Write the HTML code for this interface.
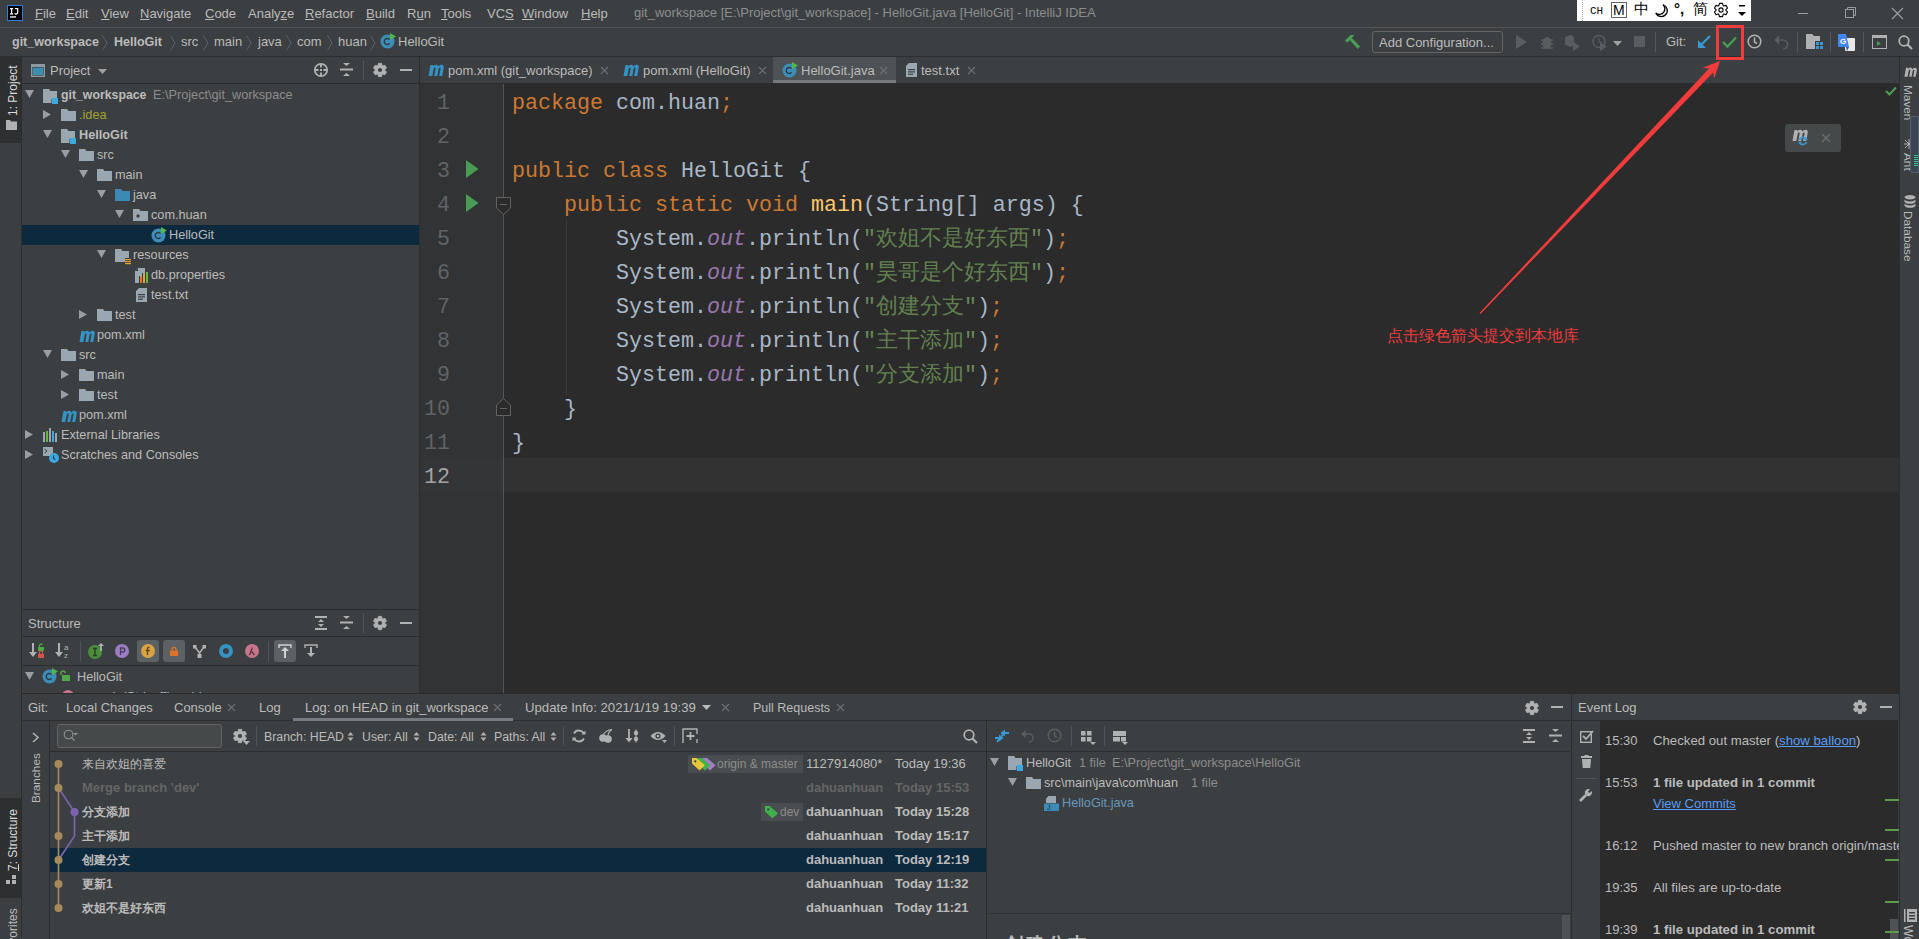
<!DOCTYPE html>
<html><head><meta charset="utf-8">
<style>
*{margin:0;padding:0;box-sizing:border-box}
html,body{width:1919px;height:939px;overflow:hidden;background:#3C3F41}
body{position:relative;font-family:"Liberation Sans",sans-serif;font-size:12.7px;color:#BBBBBB}
.a{position:absolute}
.t{position:absolute;white-space:pre;line-height:16px}
.b{font-weight:bold}
.u{text-decoration:underline}
.code{position:absolute;font-family:"Liberation Mono",monospace;font-size:21.67px;line-height:34px;white-space:pre;color:#A9B7C6}
.kw{color:#CC7832}
.str{color:#6A8759}
.st{color:#9876AA;font-style:italic}
.fn{color:#FFC66D}
.cj{font-size:22px;color:#62804F}
.c12{font-size:12px}
.ln{position:absolute;font-family:"Liberation Mono",monospace;font-size:21.67px;line-height:34px;text-align:right;width:40px}
svg{overflow:visible}
</style></head><body>
<div class="a" style="left:0px;top:0px;width:1919px;height:27px;background:#3C3F41;"></div>
<div class="a" style="left:0px;top:27px;width:1919px;height:1px;background:#505354;"></div>
<div class="a" style="left:0px;top:28px;width:1919px;height:28px;background:#3C3F41;"></div>
<div class="a" style="left:0px;top:56px;width:1919px;height:1px;background:#2B2D2E;"></div>
<svg class="a" style="left:7px;top:5px" width="16" height="16" viewBox="0 0 16 16"><rect x="0.5" y="0.5" width="15" height="15" fill="#000" stroke="#2F7BE0" stroke-width="1"/><path d="M3 3H6.2V4.2H5.2V8.2H6.2V9.5H3V8.2H4V4.2H3Z" fill="#fff"/><path d="M8 3H11.3V7.3A2.3 2.3 0 0 1 7.2 8.8L8.1 7.9A1.1 1.1 0 0 0 10.1 7.3V4.2H8Z" fill="#fff"/><rect x="3" y="11.3" width="6" height="1.3" fill="#fff"/></svg>
<div class="t " style="left:35px;top:6px;font-size:13px"><span class="u">F</span>ile</div>
<div class="t " style="left:66px;top:6px;font-size:13px"><span class="u">E</span>dit</div>
<div class="t " style="left:101px;top:6px;font-size:13px"><span class="u">V</span>iew</div>
<div class="t " style="left:140px;top:6px;font-size:13px"><span class="u">N</span>avigate</div>
<div class="t " style="left:205px;top:6px;font-size:13px"><span class="u">C</span>ode</div>
<div class="t " style="left:248px;top:6px;font-size:13px">Analy<span class="u">z</span>e</div>
<div class="t " style="left:305px;top:6px;font-size:13px"><span class="u">R</span>efactor</div>
<div class="t " style="left:366px;top:6px;font-size:13px"><span class="u">B</span>uild</div>
<div class="t " style="left:407px;top:6px;font-size:13px">R<span class="u">u</span>n</div>
<div class="t " style="left:441px;top:6px;font-size:13px"><span class="u">T</span>ools</div>
<div class="t " style="left:487px;top:6px;font-size:13px">VC<span class="u">S</span></div>
<div class="t " style="left:522px;top:6px;font-size:13px"><span class="u">W</span>indow</div>
<div class="t " style="left:581px;top:6px;font-size:13px"><span class="u">H</span>elp</div>
<div class="t " style="left:634px;top:5px;color:#8B8E90;font-size:13px">git_workspace [E:\Project\git_workspace] - HelloGit.java [HelloGit] - IntelliJ IDEA</div>
<div class="a" style="left:1577px;top:0px;width:174px;height:21px;background:#FFFFFF;"></div>
<div class="a" style="left:1582px;top:0;width:1px;height:21px;border-left:1px dotted #AAA"></div>
<div class="t " style="left:1590px;top:3px;color:#000;font-family:'Liberation Mono';font-size:11px">CH</div>
<div class="a" style="left:1611px;top:2px;width:16px;height:16px;background:transparent;border:1px solid #666"></div>
<div class="t " style="left:1613px;top:2px;color:#000;font-size:14px">M</div>
<div class="t " style="left:1634px;top:1px;color:#000;font-size:15px">中</div>
<svg class="a" style="left:1655px;top:4px" width="14" height="13" viewBox="0 0 14 13"><path d="M8 0.8A6 6 0 1 1 0.8 9A5.2 5.2 0 0 0 8 0.8Z" fill="none" stroke="#000" stroke-width="1.3"/></svg>
<div class="t " style="left:1674px;top:1px;color:#000;font-size:15px;font-weight:bold">°,</div>
<div class="t " style="left:1693px;top:1px;color:#000;font-size:15px">简</div>
<svg class="a" style="left:1714px;top:3px" width="15" height="15" viewBox="0 0 15 15"><path d="M4.85 2.60L5.47 0.37L8.53 0.37L9.15 2.60L9.74 2.94L11.97 2.36L13.50 5.01L11.89 6.66L11.89 7.34L13.50 8.99L11.97 11.64L9.74 11.06L9.15 11.40L8.53 13.63L5.47 13.63L4.85 11.40L4.26 11.06L2.03 11.64L0.50 8.99L2.11 7.34L2.11 6.66L0.50 5.01L2.03 2.36L4.26 2.94Z" fill="none" stroke="#000" stroke-width="1.1" stroke="#AFB1B3" stroke-width="0.8" stroke-linejoin="round"/><circle cx="7" cy="7" r="2.1" fill="none" stroke="#000" stroke-width="1.1"/></svg>
<svg class="a" style="left:1738px;top:5px" width="8" height="11" viewBox="0 0 8 11"><rect x="1" y="0" width="6" height="1.5" fill="#000"/><path d="M0 7H8L4 11Z" fill="#000"/></svg>
<div class="a" style="left:1798px;top:13px;width:10px;height:1px;background:#9A9DA0;"></div>
<svg class="a" style="left:1845px;top:7px" width="11" height="11" viewBox="0 0 11 11"><rect x="0.5" y="2.5" width="8" height="8" fill="none" stroke="#9A9DA0"/><path d="M2.5 2.5V0.5H10.5V8.5H8.5" fill="none" stroke="#9A9DA0"/></svg>
<svg class="a" style="left:1892px;top:8px" width="11" height="11" viewBox="0 0 11 11"><path d="M0 0L11 11M11 0L0 11" stroke="#9A9DA0" stroke-width="1.2"/></svg>
<div class="t b" style="left:12px;top:34px;font-size:12.5px">git_workspace</div>
<div class="t b" style="left:114px;top:34px;font-size:12.5px">HelloGit</div>
<div class="t " style="left:181px;top:34px;font-size:13px">src</div>
<div class="t " style="left:214px;top:34px;font-size:13px">main</div>
<div class="t " style="left:258px;top:34px;font-size:13px">java</div>
<div class="t " style="left:297px;top:34px;font-size:13px">com</div>
<div class="t " style="left:338px;top:34px;font-size:13px">huan</div>
<svg class="a" style="left:102px;top:35px" width="6" height="16" viewBox="0 0 6 16"><path d="M0.5 0.5L5 8L0.5 15.5" stroke="#5E6164" fill="none"/></svg>
<svg class="a" style="left:170px;top:35px" width="6" height="16" viewBox="0 0 6 16"><path d="M0.5 0.5L5 8L0.5 15.5" stroke="#5E6164" fill="none"/></svg>
<svg class="a" style="left:203px;top:35px" width="6" height="16" viewBox="0 0 6 16"><path d="M0.5 0.5L5 8L0.5 15.5" stroke="#5E6164" fill="none"/></svg>
<svg class="a" style="left:246px;top:35px" width="6" height="16" viewBox="0 0 6 16"><path d="M0.5 0.5L5 8L0.5 15.5" stroke="#5E6164" fill="none"/></svg>
<svg class="a" style="left:286px;top:35px" width="6" height="16" viewBox="0 0 6 16"><path d="M0.5 0.5L5 8L0.5 15.5" stroke="#5E6164" fill="none"/></svg>
<svg class="a" style="left:327px;top:35px" width="6" height="16" viewBox="0 0 6 16"><path d="M0.5 0.5L5 8L0.5 15.5" stroke="#5E6164" fill="none"/></svg>
<svg class="a" style="left:370px;top:35px" width="6" height="16" viewBox="0 0 6 16"><path d="M0.5 0.5L5 8L0.5 15.5" stroke="#5E6164" fill="none"/></svg>
<svg class="a" style="left:380px;top:33px" width="16" height="16" viewBox="0 0 16 16"><circle cx="7.5" cy="8.5" r="7" fill="#3E8DB8"/><path d="M9.6 6.6A3 3 0 1 0 9.6 10.4" stroke="#2B3A45" stroke-width="1.4" fill="none"/><path d="M10 0L16 3.5L10 7Z" fill="#4FB848"/></svg>
<div class="t " style="left:398px;top:34px;font-size:13px">HelloGit</div>
<svg class="a" style="left:1345px;top:34px" width="16" height="16" viewBox="0 0 16 16"><path d="M0 6.4L5.5 0.9H9.2L6.9 3.9L15.1 12.6L12.7 15L4.9 6.2L2 8.6Z" fill="#499C54"/></svg>
<div class="a" style="left:1372px;top:31px;width:131px;height:22px;background:transparent;border:1px solid #646464;border-radius:3px"></div>
<div class="t " style="left:1379px;top:35px;font-size:13px">Add Configuration...</div>
<svg class="a" style="left:1516px;top:35px" width="11" height="14" viewBox="0 0 11 14"><path d="M0 0V14L11 7Z" fill="#5A5D5F"/></svg>
<svg class="a" style="left:1540px;top:34px" width="14" height="16" viewBox="0 0 14 16"><ellipse cx="7" cy="9" rx="4.5" ry="6" fill="#5A5D5F"/><path d="M1 6H13M1 10H13M1 14H13" stroke="#5A5D5F" stroke-width="1.5"/></svg>
<svg class="a" style="left:1565px;top:35px" width="16" height="16" viewBox="0 0 16 16"><path d="M0 2L6 0L9 2V9L6 12L0 10Z" fill="#5A5D5F"/><path d="M8 7V16L15 11.5Z" fill="#5A5D5F"/></svg>
<svg class="a" style="left:1592px;top:34px" width="17" height="17" viewBox="0 0 17 17"><circle cx="7" cy="7.5" r="6" fill="none" stroke="#5A5D5F" stroke-width="1.5"/><path d="M7 4V8H10" stroke="#5A5D5F" fill="none"/><path d="M8 8V17L15 12.5Z" fill="#5A5D5F"/></svg>
<svg class="a" style="left:1613px;top:41px" width="9" height="5" viewBox="0 0 9 5"><path d="M0 0H9L4.5 5Z" fill="#A0A0A0"/></svg>
<div class="a" style="left:1634px;top:36px;width:11px;height:11px;background:#5A5D5F;"></div>
<div class="a" style="left:1655px;top:32px;width:1px;height:20px;background:#55585A;"></div>
<div class="t " style="left:1666px;top:34px;font-size:13px">Git:</div>
<svg class="a" style="left:1697px;top:35px" width="14" height="14" viewBox="0 0 14 14"><path d="M13 1L3 11" stroke="#3A97D4" stroke-width="2.2"/><path d="M1 5V13H9Z" fill="#3A97D4"/></svg>
<svg class="a" style="left:1722px;top:36px" width="15" height="12" viewBox="0 0 15 12"><path d="M1 6L5.5 10.5L14 1.5" stroke="#499C54" stroke-width="2.4" fill="none"/></svg>
<svg class="a" style="left:1747px;top:34px" width="15" height="15" viewBox="0 0 15 15"><circle cx="7.5" cy="7.5" r="6.3" fill="none" stroke="#AFB1B3" stroke-width="1.6"/><path d="M7.5 3.5V8L10 9.5" stroke="#AFB1B3" stroke-width="1.5" fill="none"/></svg>
<svg class="a" style="left:1774px;top:34px" width="15" height="14" viewBox="0 0 15 14"><path d="M2 6H9A4.5 4.5 0 0 1 9 15" stroke="#5A5D5F" stroke-width="1.6" fill="none"/><path d="M0 6L5 1.5V10.5Z" fill="#5A5D5F"/></svg>
<div class="a" style="left:1797px;top:32px;width:1px;height:20px;background:#55585A;"></div>
<svg class="a" style="left:1806px;top:34px" width="17" height="17" viewBox="0 0 17 17"><path d="M0 0H6L8 2H14V7H9V15H0Z" fill="#AFB1B3"/><rect x="10" y="8" width="3" height="3" fill="#3A97D4"/><rect x="14" y="8" width="3" height="3" fill="#3A97D4"/><rect x="10" y="12" width="3" height="3" fill="#3A97D4"/><rect x="14" y="12" width="3" height="3" fill="#3A97D4"/></svg>
<div class="a" style="left:1830px;top:32px;width:1px;height:20px;background:#55585A;"></div>
<svg class="a" style="left:1838px;top:34px" width="18" height="18" viewBox="0 0 18 18"><rect x="7" y="4" width="10" height="13" rx="1" fill="#E8E8E8"/><path d="M0 1Q0 0 1 0H8L11 13H1Q0 13 0 12Z" fill="#4285F4"/><text x="2" y="10" font-size="8" font-weight="bold" fill="#fff" font-family="Liberation Sans">G</text><path d="M8 13L9 17L11 13Z" fill="#3060C0"/></svg>
<div class="a" style="left:1863px;top:32px;width:1px;height:20px;background:#55585A;"></div>
<svg class="a" style="left:1872px;top:35px" width="15" height="14" viewBox="0 0 15 14"><rect x="0.5" y="0.5" width="14" height="13" fill="none" stroke="#AFB1B3"/><rect x="0.5" y="0.5" width="14" height="2.5" fill="#AFB1B3"/><path d="M5 6V11L9 8.5Z" fill="#499C54"/></svg>
<svg class="a" style="left:1898px;top:35px" width="15" height="15" viewBox="0 0 15 15"><circle cx="6" cy="6" r="4.8" fill="none" stroke="#AFB1B3" stroke-width="1.8"/><path d="M9.5 9.5L14 14" stroke="#AFB1B3" stroke-width="2.2"/></svg>
<div class="a" style="left:0px;top:57px;width:21px;height:882px;background:#3C3F41;"></div>
<div class="a" style="left:21px;top:57px;width:1px;height:882px;background:#2B2D2E;"></div>
<div class="a" style="left:0px;top:57px;width:21px;height:86px;background:#2D2F30;"></div>
<div class="a" style="left:6px;top:116px;width:60px;height:14px;transform-origin:0 0;transform:rotate(-90deg);font-size:12px;line-height:14px;color:#DADADA;white-space:pre">1: Project</div>
<svg class="a" style="left:6px;top:120px" width="11" height="10" viewBox="0 0 11 10"><path d="M0 0H4L5 1.5H11V10H0Z" fill="#AFB1B3"/></svg>
<div class="a" style="left:0px;top:798px;width:21px;height:100px;background:#2D2F30;"></div>
<div class="a" style="left:6px;top:871px;width:70px;height:14px;transform-origin:0 0;transform:rotate(-90deg);font-size:12px;line-height:14px;color:#DADADA;white-space:pre"><span class="u">7</span>: Structure</div>
<svg class="a" style="left:6px;top:875px" width="11" height="10" viewBox="0 0 11 10"><rect x="0" y="5" width="4" height="4" fill="#AFB1B3"/><rect x="6" y="5" width="4" height="4" fill="#AFB1B3"/><rect x="6" y="0" width="4" height="4" fill="#AFB1B3"/></svg>
<div class="a" style="left:6px;top:971px;width:70px;height:14px;transform-origin:0 0;transform:rotate(-90deg);font-size:12px;line-height:14px;color:#BBBBBB;white-space:pre">2: Favorites</div>
<div class="a" style="left:22px;top:57px;width:397px;height:636px;background:#3C3F41;"></div>
<div class="a" style="left:419px;top:57px;width:1px;height:636px;background:#2B2D2E;"></div>
<div class="a" style="left:22px;top:83px;width:397px;height:1px;background:#2B2D2E;"></div>
<svg class="a" style="left:31px;top:64px" width="14" height="13" viewBox="0 0 14 13"><rect x="0" y="0" width="14" height="13" fill="#8E989F"/><rect x="1.5" y="3" width="11" height="8.5" fill="#2B2D2E"/><rect x="2" y="3.5" width="10" height="7.5" fill="#3D8FB0"/></svg>
<div class="t " style="left:50px;top:63px;font-size:13px">Project</div>
<svg class="a" style="left:98px;top:69px" width="9" height="5" viewBox="0 0 9 5"><path d="M0 0H9L4.5 5Z" fill="#A0A0A0"/></svg>
<svg class="a" style="left:314px;top:63px" width="14" height="14" viewBox="0 0 14 14"><circle cx="7" cy="7" r="6.2" fill="none" stroke="#AFB1B3" stroke-width="1.7"/><path d="M7 1V4.6M7 9.4V13M1 7H4.6M9.4 7H13" stroke="#AFB1B3" stroke-width="1.9"/><rect x="6" y="6" width="2" height="2" fill="#AFB1B3"/></svg>
<svg class="a" style="left:340px;top:63px" width="13" height="13" viewBox="0 0 13 13"><path d="M3 0H10L6.5 3Z" fill="#AFB1B3"/><rect x="0" y="5.5" width="13" height="2" fill="#AFB1B3"/><path d="M3 13H10L6.5 10Z" fill="#AFB1B3"/></svg>
<div class="a" style="left:363px;top:60px;width:1px;height:20px;background:#515456;"></div>
<svg class="a" style="left:373px;top:63px" width="14" height="14" viewBox="0 0 14 14"><path d="M4.85 2.60L5.47 0.37L8.53 0.37L9.15 2.60L9.74 2.94L11.97 2.36L13.50 5.01L11.89 6.66L11.89 7.34L13.50 8.99L11.97 11.64L9.74 11.06L9.15 11.40L8.53 13.63L5.47 13.63L4.85 11.40L4.26 11.06L2.03 11.64L0.50 8.99L2.11 7.34L2.11 6.66L0.50 5.01L2.03 2.36L4.26 2.94Z" fill="#AFB1B3" stroke="#AFB1B3" stroke-width="0.8" stroke-linejoin="round"/><circle cx="7" cy="7" r="2.1" fill="#3C3F41"/></svg>
<div class="a" style="left:400px;top:69px;width:12px;height:2px;background:#AFB1B3;"></div>
<div class="a" style="left:22px;top:225px;width:397px;height:20px;background:#0D293E;"></div>
<svg class="a" style="left:25px;top:90px" width="9" height="8" viewBox="0 0 9 8"><path d="M0 0H9L4.5 8Z" fill="#9A9DA1"/></svg>
<svg class="a" style="left:43px;top:89px" width="16" height="15" viewBox="0 0 16 15"><path d="M0 0H6L7.5 2H14V10H8.5V14H0Z" fill="#9AA7B0"/><rect x="9" y="9" width="6" height="6" fill="#3BA8E0"/></svg>
<div class="t " style="left:61px;top:87px;"><b style="font-size:12.3px">git_workspace</b></div>
<svg class="a" style="left:43px;top:110px" width="8" height="9" viewBox="0 0 8 9"><path d="M0 0V9L8 4.5Z" fill="#9A9DA1"/></svg>
<svg class="a" style="left:61px;top:109px" width="15" height="12" viewBox="0 0 15 12"><path d="M0 0H6L7.5 2H15V12H0Z" fill="#9AA7B0"/></svg>
<div class="t " style="left:79px;top:107px;"><span style="color:#A2A232">.idea</span></div>
<svg class="a" style="left:43px;top:130px" width="9" height="8" viewBox="0 0 9 8"><path d="M0 0H9L4.5 8Z" fill="#9A9DA1"/></svg>
<svg class="a" style="left:61px;top:129px" width="16" height="15" viewBox="0 0 16 15"><path d="M0 0H6L7.5 2H14V10H8.5V14H0Z" fill="#9AA7B0"/><rect x="9" y="9" width="6" height="6" fill="#3BA8E0"/></svg>
<div class="t " style="left:79px;top:127px;"><b>HelloGit</b></div>
<svg class="a" style="left:61px;top:150px" width="9" height="8" viewBox="0 0 9 8"><path d="M0 0H9L4.5 8Z" fill="#9A9DA1"/></svg>
<svg class="a" style="left:79px;top:149px" width="15" height="12" viewBox="0 0 15 12"><path d="M0 0H6L7.5 2H15V12H0Z" fill="#9AA7B0"/></svg>
<div class="t " style="left:97px;top:147px;">src</div>
<svg class="a" style="left:79px;top:170px" width="9" height="8" viewBox="0 0 9 8"><path d="M0 0H9L4.5 8Z" fill="#9A9DA1"/></svg>
<svg class="a" style="left:97px;top:169px" width="15" height="12" viewBox="0 0 15 12"><path d="M0 0H6L7.5 2H15V12H0Z" fill="#9AA7B0"/></svg>
<div class="t " style="left:115px;top:167px;">main</div>
<svg class="a" style="left:97px;top:190px" width="9" height="8" viewBox="0 0 9 8"><path d="M0 0H9L4.5 8Z" fill="#9A9DA1"/></svg>
<svg class="a" style="left:115px;top:189px" width="15" height="12" viewBox="0 0 15 12"><path d="M0 0H6L7.5 2H15V12H0Z" fill="#3D89B5"/></svg>
<div class="t " style="left:133px;top:187px;">java</div>
<svg class="a" style="left:115px;top:210px" width="9" height="8" viewBox="0 0 9 8"><path d="M0 0H9L4.5 8Z" fill="#9A9DA1"/></svg>
<svg class="a" style="left:133px;top:209px" width="15" height="12" viewBox="0 0 15 12"><path d="M0 0H6L7.5 2H15V12H0Z" fill="#9AA7B0"/><circle cx="5" cy="7" r="1.7" fill="#3C3F41"/></svg>
<div class="t " style="left:151px;top:207px;">com.huan</div>
<svg class="a" style="left:151px;top:227px" width="16" height="16" viewBox="0 0 16 16"><circle cx="7.5" cy="8.5" r="7" fill="#3E8DB8"/><path d="M9.6 6.6A3 3 0 1 0 9.6 10.4" stroke="#2B3A45" stroke-width="1.4" fill="none"/><path d="M10 0L16 3.5L10 7Z" fill="#4FB848"/></svg>
<div class="t " style="left:169px;top:227px;">HelloGit</div>
<svg class="a" style="left:97px;top:250px" width="9" height="8" viewBox="0 0 9 8"><path d="M0 0H9L4.5 8Z" fill="#9A9DA1"/></svg>
<svg class="a" style="left:115px;top:249px" width="16" height="15" viewBox="0 0 16 15"><path d="M0 0H6L7.5 2H14V9H10V13H0Z" fill="#9AA7B0"/><rect x="10" y="10" width="6" height="1.2" fill="#E0A431"/><rect x="10" y="12" width="6" height="1.2" fill="#E0A431"/><rect x="10" y="14" width="6" height="1.2" fill="#E0A431"/></svg>
<div class="t " style="left:133px;top:247px;">resources</div>
<svg class="a" style="left:135px;top:268px" width="14" height="15" viewBox="0 0 14 15"><path d="M3 0H10V15H0V3Z" fill="#9AA7B0"/><path d="M0 3H3V0Z" fill="#3C3F41"/><rect x="5" y="9" width="2" height="6" fill="#E8742A"/><rect x="8" y="6" width="2" height="9" fill="#E0A431"/><rect x="11" y="4" width="2" height="11" fill="#5FB83A"/><rect x="4" y="8" width="1" height="7" fill="#3C3F41"/><rect x="7" y="5" width="1" height="10" fill="#3C3F41"/><rect x="10" y="3" width="1" height="12" fill="#3C3F41"/></svg>
<div class="t " style="left:151px;top:267px;">db.properties</div>
<svg class="a" style="left:136px;top:288px" width="11" height="14" viewBox="0 0 11 14"><path d="M3 0H11V14H0V3Z" fill="#9AA7B0"/><rect x="2" y="6" width="7" height="1.2" fill="#3C3F41"/><rect x="2" y="8.3" width="7" height="1.2" fill="#3C3F41"/><rect x="2" y="10.6" width="5" height="1.2" fill="#3C3F41"/></svg>
<div class="t " style="left:151px;top:287px;">test.txt</div>
<svg class="a" style="left:79px;top:310px" width="8" height="9" viewBox="0 0 8 9"><path d="M0 0V9L8 4.5Z" fill="#9A9DA1"/></svg>
<svg class="a" style="left:97px;top:309px" width="15" height="12" viewBox="0 0 15 12"><path d="M0 0H6L7.5 2H15V12H0Z" fill="#9AA7B0"/></svg>
<div class="t " style="left:115px;top:307px;">test</div>
<svg class="a" style="left:79px;top:330px" width="16" height="12" viewBox="0 0 16 12"><path d="M0.5 12L2.5 1H5.2L5 2.4Q6.5 0.5 8.5 0.8Q10 1 10.3 2.6Q11.8 0.6 13.8 0.8Q16.2 1.2 15.7 4L14.2 12H11.2L12.6 4.6Q12.8 3.5 11.9 3.5Q10.9 3.5 10.6 4.8L9.2 12H6.3L7.7 4.6Q7.9 3.5 7 3.5Q6 3.5 5.7 4.8L4.3 12Z" fill="#3592C4"/></svg>
<div class="t " style="left:97px;top:327px;">pom.xml</div>
<svg class="a" style="left:43px;top:350px" width="9" height="8" viewBox="0 0 9 8"><path d="M0 0H9L4.5 8Z" fill="#9A9DA1"/></svg>
<svg class="a" style="left:61px;top:349px" width="15" height="12" viewBox="0 0 15 12"><path d="M0 0H6L7.5 2H15V12H0Z" fill="#9AA7B0"/></svg>
<div class="t " style="left:79px;top:347px;">src</div>
<svg class="a" style="left:61px;top:370px" width="8" height="9" viewBox="0 0 8 9"><path d="M0 0V9L8 4.5Z" fill="#9A9DA1"/></svg>
<svg class="a" style="left:79px;top:369px" width="15" height="12" viewBox="0 0 15 12"><path d="M0 0H6L7.5 2H15V12H0Z" fill="#9AA7B0"/></svg>
<div class="t " style="left:97px;top:367px;">main</div>
<svg class="a" style="left:61px;top:390px" width="8" height="9" viewBox="0 0 8 9"><path d="M0 0V9L8 4.5Z" fill="#9A9DA1"/></svg>
<svg class="a" style="left:79px;top:389px" width="15" height="12" viewBox="0 0 15 12"><path d="M0 0H6L7.5 2H15V12H0Z" fill="#9AA7B0"/></svg>
<div class="t " style="left:97px;top:387px;">test</div>
<svg class="a" style="left:61px;top:410px" width="16" height="12" viewBox="0 0 16 12"><path d="M0.5 12L2.5 1H5.2L5 2.4Q6.5 0.5 8.5 0.8Q10 1 10.3 2.6Q11.8 0.6 13.8 0.8Q16.2 1.2 15.7 4L14.2 12H11.2L12.6 4.6Q12.8 3.5 11.9 3.5Q10.9 3.5 10.6 4.8L9.2 12H6.3L7.7 4.6Q7.9 3.5 7 3.5Q6 3.5 5.7 4.8L4.3 12Z" fill="#3592C4"/></svg>
<div class="t " style="left:79px;top:407px;">pom.xml</div>
<svg class="a" style="left:25px;top:430px" width="8" height="9" viewBox="0 0 8 9"><path d="M0 0V9L8 4.5Z" fill="#9A9DA1"/></svg>
<svg class="a" style="left:43px;top:428px" width="14" height="14" viewBox="0 0 14 14"><rect x="0" y="4" width="2" height="10" fill="#9AA7B0"/><rect x="3" y="3" width="2" height="11" fill="#5FB83A"/><rect x="6" y="0" width="2" height="14" fill="#9AA7B0"/><rect x="9" y="3" width="2" height="11" fill="#3BA8E0"/><rect x="12" y="5" width="2" height="9" fill="#9AA7B0"/></svg>
<div class="t " style="left:61px;top:427px;">External Libraries</div>
<svg class="a" style="left:25px;top:450px" width="8" height="9" viewBox="0 0 8 9"><path d="M0 0V9L8 4.5Z" fill="#9A9DA1"/></svg>
<svg class="a" style="left:43px;top:447px" width="16" height="16" viewBox="0 0 16 16"><rect x="0" y="0" width="10" height="9" fill="#9AA7B0"/><path d="M1.5 2L4 4L1.5 6" stroke="#3C3F41" fill="none" stroke-width="1"/><circle cx="11" cy="11" r="5" fill="#3BA8E0"/><path d="M10.5 8.5V11.5L12.5 12.5" stroke="#2B3A45" stroke-width="1.1" fill="none"/></svg>
<div class="t " style="left:61px;top:447px;">Scratches and Consoles</div>
<div class="t " style="left:153px;top:87px;color:#8C8C8C">E:\Project\git_workspace</div>
<div class="a" style="left:22px;top:609px;width:397px;height:1px;background:#2B2D2E;"></div>
<div class="t " style="left:28px;top:616px;font-size:13px">Structure</div>
<svg class="a" style="left:315px;top:616px" width="13" height="14" viewBox="0 0 13 14"><rect x="0" y="0" width="12" height="2" fill="#AFB1B3"/><path d="M3 6H9L6 3Z" fill="#AFB1B3"/><path d="M3 8H9L6 11Z" fill="#AFB1B3"/><rect x="0" y="12" width="12" height="2" fill="#AFB1B3"/></svg>
<svg class="a" style="left:340px;top:616px" width="13" height="13" viewBox="0 0 13 13"><path d="M3 0H10L6.5 3Z" fill="#AFB1B3"/><rect x="0" y="5.5" width="13" height="2" fill="#AFB1B3"/><path d="M3 13H10L6.5 10Z" fill="#AFB1B3"/></svg>
<div class="a" style="left:363px;top:613px;width:1px;height:20px;background:#515456;"></div>
<svg class="a" style="left:373px;top:616px" width="14" height="14" viewBox="0 0 14 14"><path d="M4.85 2.60L5.47 0.37L8.53 0.37L9.15 2.60L9.74 2.94L11.97 2.36L13.50 5.01L11.89 6.66L11.89 7.34L13.50 8.99L11.97 11.64L9.74 11.06L9.15 11.40L8.53 13.63L5.47 13.63L4.85 11.40L4.26 11.06L2.03 11.64L0.50 8.99L2.11 7.34L2.11 6.66L0.50 5.01L2.03 2.36L4.26 2.94Z" fill="#AFB1B3" stroke="#AFB1B3" stroke-width="0.8" stroke-linejoin="round"/><circle cx="7" cy="7" r="2.1" fill="#3C3F41"/></svg>
<div class="a" style="left:400px;top:622px;width:12px;height:2px;background:#AFB1B3;"></div>
<div class="a" style="left:22px;top:636px;width:397px;height:1px;background:#2B2D2E;"></div>
<div class="a" style="left:22px;top:665px;width:397px;height:1px;background:#2B2D2E;"></div>
<svg class="a" style="left:29px;top:643px" width="16" height="15" viewBox="0 0 16 15"><path d="M4 0V10" stroke="#AFB1B3" stroke-width="2"/><path d="M0 9H8L4 14Z" fill="#AFB1B3"/><rect x="9" y="4" width="6" height="4" fill="#4FA84A"/><path d="M10.5 4V2A1.7 1.7 0 0 1 13.5 2" stroke="#4FA84A" fill="none" stroke-width="1.2"/><rect x="9" y="11" width="6" height="4" fill="#D9534F"/><path d="M10.5 11V9.5A1.5 1.5 0 0 1 13.5 9.5V11" stroke="#D9534F" fill="none" stroke-width="1.2"/></svg>
<svg class="a" style="left:55px;top:643px" width="15" height="15" viewBox="0 0 15 15"><path d="M4 0V10" stroke="#AFB1B3" stroke-width="2"/><path d="M0 9H8L4 14Z" fill="#AFB1B3"/><text x="9" y="6.5" font-size="8" fill="#AFB1B3" font-family="Liberation Sans">a</text><text x="9" y="14.5" font-size="8" fill="#AFB1B3" font-family="Liberation Sans">z</text></svg>
<div class="a" style="left:80px;top:641px;width:1px;height:20px;background:#515456;"></div>
<svg class="a" style="left:88px;top:643px" width="17" height="16" viewBox="0 0 17 16"><circle cx="7" cy="9" r="7" fill="#4A8E3B"/><path d="M5 5.5H9M7 5.5V12.5M5 12.5H9" stroke="#2F3A2C" stroke-width="1.4"/><path d="M13 8V2" stroke="#AFB1B3" stroke-width="1.8"/><path d="M10 3L13 0L16 3Z" fill="#AFB1B3"/></svg>
<svg class="a" style="left:115px;top:644px" width="14" height="14" viewBox="0 0 14 14"><circle cx="7" cy="7" r="7" fill="#9B7CC5"/><path d="M5.5 11V4H7.8A2 2 0 0 1 7.8 8H5.5" stroke="#4A3F5C" stroke-width="1.3" fill="none"/></svg>
<div class="a" style="left:137px;top:640px;width:22px;height:22px;background:#5C6164;border-radius:3px"></div>
<svg class="a" style="left:141px;top:644px" width="14" height="14" viewBox="0 0 14 14"><circle cx="7" cy="7" r="7" fill="#D9A343"/><path d="M8.5 3.5Q6.5 3 6.5 5V11M4.8 6.5H8.7" stroke="#5A4420" stroke-width="1.3" fill="none"/></svg>
<div class="a" style="left:163px;top:640px;width:22px;height:22px;background:#5C6164;border-radius:3px"></div>
<svg class="a" style="left:170px;top:647px" width="8" height="9" viewBox="0 0 8 9"><rect x="0" y="3.5" width="8" height="5.5" fill="#E0702A"/><path d="M2 3.8V2.5A2 2 0 0 1 6 2.5V3.8" stroke="#E0702A" stroke-width="1.3" fill="none"/></svg>
<svg class="a" style="left:193px;top:645px" width="13" height="13" viewBox="0 0 13 13"><rect x="0" y="0" width="3.5" height="3.5" fill="#AFB1B3"/><rect x="9.5" y="0" width="3.5" height="3.5" fill="#AFB1B3"/><rect x="4.5" y="9" width="4" height="4" fill="#AFB1B3"/><path d="M2 2L6.5 8L11 2M6.5 8V10" stroke="#AFB1B3" stroke-width="1.5" fill="none"/></svg>
<svg class="a" style="left:219px;top:644px" width="14" height="14" viewBox="0 0 14 14"><circle cx="7" cy="7" r="5" fill="none" stroke="#3592C4" stroke-width="4"/></svg>
<svg class="a" style="left:245px;top:644px" width="14" height="14" viewBox="0 0 14 14"><circle cx="7" cy="7" r="7" fill="#C6758A"/><path d="M4.5 11L7.5 3.5M6.2 7L9.5 11" stroke="#5C3540" stroke-width="1.3" fill="none"/></svg>
<div class="a" style="left:268px;top:641px;width:1px;height:20px;background:#515456;"></div>
<div class="a" style="left:274px;top:640px;width:22px;height:22px;background:#5C6164;border-radius:3px"></div>
<svg class="a" style="left:278px;top:644px" width="14" height="14" viewBox="0 0 14 14"><path d="M1 4V1H13V4" stroke="#CFD1D3" stroke-width="1.4" fill="none"/><path d="M7 14V6" stroke="#CFD1D3" stroke-width="2"/><path d="M3 7L7 3L11 7Z" fill="#CFD1D3"/></svg>
<svg class="a" style="left:304px;top:644px" width="14" height="14" viewBox="0 0 14 14"><path d="M1 4V1H13V4" stroke="#AFB1B3" stroke-width="1.4" fill="none"/><path d="M7 3V10" stroke="#AFB1B3" stroke-width="2"/><path d="M3 9L7 13L11 9Z" fill="#AFB1B3"/></svg>
<svg class="a" style="left:25px;top:672px" width="9" height="8" viewBox="0 0 9 8"><path d="M0 0H9L4.5 8Z" fill="#9A9DA1"/></svg>
<svg class="a" style="left:42px;top:668px" width="16" height="16" viewBox="0 0 16 16"><circle cx="7.5" cy="8.5" r="7" fill="#3E8DB8"/><path d="M9.6 6.6A3 3 0 1 0 9.6 10.4" stroke="#2B3A45" stroke-width="1.4" fill="none"/><path d="M10 0L16 3.5L10 7Z" fill="#4FB848"/></svg>
<svg class="a" style="left:60px;top:670px" width="10" height="11" viewBox="0 0 10 11"><rect x="2" y="5" width="8" height="6" fill="#4FA84A"/><path d="M1 5V3A2 2 0 0 1 5 3" stroke="#4FA84A" stroke-width="1.4" fill="none"/></svg>
<div class="t " style="left:77px;top:669px;">HelloGit</div>
<div class="a" style="left:22px;top:686px;width:397px;height:7px;overflow:hidden"><div class="a" style="left:40px;top:4px;width:12px;height:12px;border-radius:6px;background:#C6758A"></div><div class="t" style="left:73px;top:3px">main(String[]): void</div></div>
<div class="a" style="left:420px;top:57px;width:1479px;height:26px;background:#3C3F41;"></div>
<div class="a" style="left:420px;top:83px;width:1479px;height:1px;background:#2B2D2E;"></div>
<div class="a" style="left:773px;top:57px;width:123px;height:26px;background:#4E5254;"></div>
<div class="a" style="left:773px;top:80px;width:123px;height:3px;background:#747A80;"></div>
<svg class="a" style="left:428px;top:64px" width="16" height="12" viewBox="0 0 16 12"><path d="M0.5 12L2.5 1H5.2L5 2.4Q6.5 0.5 8.5 0.8Q10 1 10.3 2.6Q11.8 0.6 13.8 0.8Q16.2 1.2 15.7 4L14.2 12H11.2L12.6 4.6Q12.8 3.5 11.9 3.5Q10.9 3.5 10.6 4.8L9.2 12H6.3L7.7 4.6Q7.9 3.5 7 3.5Q6 3.5 5.7 4.8L4.3 12Z" fill="#3592C4"/></svg>
<div class="t " style="left:448px;top:63px;font-size:13px">pom.xml (git_workspace)</div>
<svg class="a" style="left:601px;top:67px" width="7" height="7" viewBox="0 0 7 7"><path d="M0 0L7 7M7 0L0 7" stroke="#6E7173" stroke-width="1.1"/></svg>
<svg class="a" style="left:623px;top:64px" width="16" height="12" viewBox="0 0 16 12"><path d="M0.5 12L2.5 1H5.2L5 2.4Q6.5 0.5 8.5 0.8Q10 1 10.3 2.6Q11.8 0.6 13.8 0.8Q16.2 1.2 15.7 4L14.2 12H11.2L12.6 4.6Q12.8 3.5 11.9 3.5Q10.9 3.5 10.6 4.8L9.2 12H6.3L7.7 4.6Q7.9 3.5 7 3.5Q6 3.5 5.7 4.8L4.3 12Z" fill="#3592C4"/></svg>
<div class="t " style="left:643px;top:63px;font-size:13px">pom.xml (HelloGit)</div>
<svg class="a" style="left:759px;top:67px" width="7" height="7" viewBox="0 0 7 7"><path d="M0 0L7 7M7 0L0 7" stroke="#6E7173" stroke-width="1.1"/></svg>
<svg class="a" style="left:782px;top:62px" width="16" height="16" viewBox="0 0 16 16"><circle cx="7.5" cy="8.5" r="7" fill="#3E8DB8"/><path d="M9.6 6.6A3 3 0 1 0 9.6 10.4" stroke="#2B3A45" stroke-width="1.4" fill="none"/><path d="M10 0L16 3.5L10 7Z" fill="#4FB848"/></svg>
<div class="t " style="left:801px;top:63px;font-size:13px">HelloGit.java</div>
<svg class="a" style="left:880px;top:67px" width="7" height="7" viewBox="0 0 7 7"><path d="M0 0L7 7M7 0L0 7" stroke="#6E7173" stroke-width="1.1"/></svg>
<svg class="a" style="left:906px;top:63px" width="11" height="14" viewBox="0 0 11 14"><path d="M3 0H11V14H0V3Z" fill="#9AA7B0"/><rect x="2" y="6" width="7" height="1.2" fill="#3C3F41"/><rect x="2" y="8.3" width="7" height="1.2" fill="#3C3F41"/><rect x="2" y="10.6" width="5" height="1.2" fill="#3C3F41"/></svg>
<div class="t " style="left:921px;top:63px;font-size:13px">test.txt</div>
<svg class="a" style="left:968px;top:67px" width="7" height="7" viewBox="0 0 7 7"><path d="M0 0L7 7M7 0L0 7" stroke="#6E7173" stroke-width="1.1"/></svg>
<div class="a" style="left:420px;top:84px;width:83px;height:609px;background:#313335;"></div>
<div class="a" style="left:503px;top:84px;width:1px;height:609px;background:#555555;"></div>
<div class="a" style="left:504px;top:84px;width:1395px;height:609px;background:#2B2B2B;"></div>
<div class="a" style="left:420px;top:458px;width:83px;height:34px;background:#333537;"></div>
<div class="a" style="left:504px;top:458px;width:1395px;height:34px;background:#323232;"></div>
<div class="ln" style="left:410px;top:87px;color:#606366">1</div>
<div class="ln" style="left:410px;top:121px;color:#606366">2</div>
<div class="ln" style="left:410px;top:155px;color:#606366">3</div>
<div class="ln" style="left:410px;top:189px;color:#606366">4</div>
<div class="ln" style="left:410px;top:223px;color:#606366">5</div>
<div class="ln" style="left:410px;top:257px;color:#606366">6</div>
<div class="ln" style="left:410px;top:291px;color:#606366">7</div>
<div class="ln" style="left:410px;top:325px;color:#606366">8</div>
<div class="ln" style="left:410px;top:359px;color:#606366">9</div>
<div class="ln" style="left:410px;top:393px;color:#606366">10</div>
<div class="ln" style="left:410px;top:427px;color:#606366">11</div>
<div class="ln" style="left:410px;top:461px;color:#A4A3A3">12</div>
<svg class="a" style="left:466px;top:160px" width="13" height="18" viewBox="0 0 13 18"><path d="M0 0V18L12.5 9Z" fill="#499C54"/></svg>
<svg class="a" style="left:466px;top:194px" width="13" height="18" viewBox="0 0 13 18"><path d="M0 0V18L12.5 9Z" fill="#499C54"/></svg>
<svg class="a" style="left:495px;top:197px" width="17" height="20" viewBox="0 0 17 20"><path d="M1.5 0.5H15.5V11L8.5 17.5L1.5 11Z" fill="#2B2B2B" stroke="#636363"/><rect x="5" y="7" width="7" height="1" fill="#636363"/></svg>
<svg class="a" style="left:495px;top:397px" width="17" height="20" viewBox="0 0 17 20"><path d="M1.5 18.5H15.5V8L8.5 1.5L1.5 8Z" fill="#2B2B2B" stroke="#636363"/><rect x="5" y="11" width="7" height="1" fill="#636363"/></svg>
<div class="a" style="left:566px;top:220px;width:1px;height:175px;background:#3B3B3B;"></div>
<div class="code" style="left:512px;top:87px"><span class="kw">package</span> com.huan<span class="kw">;</span></div>
<div class="code" style="left:512px;top:121px"></div>
<div class="code" style="left:512px;top:155px"><span class="kw">public class</span> HelloGit {</div>
<div class="code" style="left:512px;top:189px">    <span class="kw">public static void</span> <span class="fn">main</span>(String[] args) {</div>
<div class="code" style="left:512px;top:223px">        System.<span class="st">out</span>.println(<span class="str">"<span class="cj">欢姐不是好东西</span>"</span>)<span class="kw">;</span></div>
<div class="code" style="left:512px;top:257px">        System.<span class="st">out</span>.println(<span class="str">"<span class="cj">昊哥是个好东西</span>"</span>)<span class="kw">;</span></div>
<div class="code" style="left:512px;top:291px">        System.<span class="st">out</span>.println(<span class="str">"<span class="cj">创建分支</span>"</span>)<span class="kw">;</span></div>
<div class="code" style="left:512px;top:325px">        System.<span class="st">out</span>.println(<span class="str">"<span class="cj">主干添加</span>"</span>)<span class="kw">;</span></div>
<div class="code" style="left:512px;top:359px">        System.<span class="st">out</span>.println(<span class="str">"<span class="cj">分支添加</span>"</span>)<span class="kw">;</span></div>
<div class="code" style="left:512px;top:393px">    }</div>
<div class="code" style="left:512px;top:427px">}</div>
<div class="code" style="left:512px;top:461px"></div>
<svg class="a" style="left:1885px;top:86px" width="12" height="10" viewBox="0 0 12 10"><path d="M1 5L4.5 8.5L11 1.5" stroke="#499C54" stroke-width="2.2" fill="none"/></svg>
<div class="a" style="left:1785px;top:124px;width:56px;height:28px;background:#45494A;border-radius:3px"></div>
<svg class="a" style="left:1792px;top:129px" width="16" height="12" viewBox="0 0 16 12"><path d="M0.5 12L2.5 1H5.2L5 2.4Q6.5 0.5 8.5 0.8Q10 1 10.3 2.6Q11.8 0.6 13.8 0.8Q16.2 1.2 15.7 4L14.2 12H11.2L12.6 4.6Q12.8 3.5 11.9 3.5Q10.9 3.5 10.6 4.8L9.2 12H6.3L7.7 4.6Q7.9 3.5 7 3.5Q6 3.5 5.7 4.8L4.3 12Z" fill="#AFB1B3"/></svg>
<svg class="a" style="left:1798px;top:136px" width="10" height="10" viewBox="0 0 10 10"><path d="M8.5 3.5A3.8 3.8 0 0 0 1.5 4" stroke="#3A97D4" stroke-width="1.6" fill="none"/><path d="M1.5 6.5A3.8 3.8 0 0 0 8.5 6" stroke="#3A97D4" stroke-width="1.6" fill="none"/><path d="M7 1L10 4L6.5 4.5Z" fill="#3A97D4"/><path d="M3 9L0 6L3.5 5.5Z" fill="#3A97D4"/></svg>
<svg class="a" style="left:1822px;top:134px" width="8" height="8" viewBox="0 0 8 8"><path d="M0 0L8 8M8 0L0 8" stroke="#6E7173" stroke-width="1.1"/></svg>
<div class="a" style="left:1900px;top:57px;width:19px;height:882px;background:#3C3F41;"></div>
<div class="a" style="left:1899px;top:57px;width:1px;height:882px;background:#2B2D2E;"></div>
<div class="a" style="left:1904px;top:67px;width:13px;height:10px;overflow:visible"><div style="transform:scale(0.82);transform-origin:0 0"><svg class="a" style="left:0px;top:0px" width="16" height="12" viewBox="0 0 16 12"><path d="M0.5 12L2.5 1H5.2L5 2.4Q6.5 0.5 8.5 0.8Q10 1 10.3 2.6Q11.8 0.6 13.8 0.8Q16.2 1.2 15.7 4L14.2 12H11.2L12.6 4.6Q12.8 3.5 11.9 3.5Q10.9 3.5 10.6 4.8L9.2 12H6.3L7.7 4.6Q7.9 3.5 7 3.5Q6 3.5 5.7 4.8L4.3 12Z" fill="#AFB1B3"/></svg></div></div>
<div class="a" style="left:1915px;top:85px;width:60px;height:14px;transform-origin:0 0;transform:rotate(90deg);font-size:11.8px;line-height:14px;color:#BBBBBB;white-space:pre">Maven</div>
<div class="a" style="left:1915px;top:153px;width:60px;height:14px;transform-origin:0 0;transform:rotate(90deg);font-size:11.8px;line-height:14px;color:#BBBBBB;white-space:pre">Ant</div>
<svg class="a" style="left:1904px;top:139px" width="10" height="10" viewBox="0 0 10 10"><path d="M1 1L9 9M9 1L1 9M5 0V10M0 5H10" stroke="#AFB1B3" stroke-width="1"/></svg>
<svg class="a" style="left:1904px;top:195px" width="12" height="13" viewBox="0 0 12 13"><ellipse cx="6" cy="2.2" rx="5.5" ry="2.2" fill="#AFB1B3"/><path d="M0.5 4.2A5.5 2.2 0 0 0 11.5 4.2V6.6A5.5 2.2 0 0 1 0.5 6.6Z" fill="#AFB1B3"/><path d="M0.5 8.2A5.5 2.2 0 0 0 11.5 8.2V10.6A5.5 2.2 0 0 1 0.5 10.6Z" fill="#AFB1B3"/></svg>
<div class="a" style="left:1915px;top:211px;width:60px;height:14px;transform-origin:0 0;transform:rotate(90deg);font-size:11.8px;line-height:14px;color:#BBBBBB;white-space:pre">Database</div>
<div class="a" style="left:1910px;top:116px;width:9px;height:57px;background:#3A4550;border:1px solid #556070;border-radius:3px 0 0 3px"></div>
<div class="a" style="left:1914px;top:155px;width:4px;height:1px;background:#3FC08A;"></div>
<div class="a" style="left:1914px;top:157px;width:4px;height:1px;background:#3FC08A;"></div>
<div class="a" style="left:1914px;top:159px;width:4px;height:1px;background:#3FC08A;"></div>
<div class="a" style="left:1914px;top:161px;width:4px;height:1px;background:#3FC08A;"></div>
<div class="a" style="left:1914px;top:163px;width:4px;height:1px;background:#3FC08A;"></div>
<div class="a" style="left:1914px;top:165px;width:4px;height:1px;background:#3FC08A;"></div>
<svg class="a" style="left:1904px;top:909px" width="12" height="12" viewBox="0 0 12 12"><rect x="0" y="0" width="1.5" height="13" fill="#AFB1B3"/><rect x="3" y="0" width="10" height="13" fill="#AFB1B3"/><rect x="5" y="3" width="6" height="1.5" fill="#3C3F41"/><rect x="5" y="6" width="6" height="1.5" fill="#3C3F41"/><rect x="5" y="9" width="6" height="1.5" fill="#3C3F41"/></svg>
<div class="a" style="left:1915px;top:925px;width:60px;height:14px;transform-origin:0 0;transform:rotate(90deg);font-size:12.5px;line-height:14px;color:#BBBBBB;white-space:pre">Word</div>
<div class="a" style="left:22px;top:693px;width:1877px;height:1px;background:#2B2B2B;"></div>
<div class="a" style="left:22px;top:694px;width:1548px;height:26px;background:#3C3F41;"></div>
<div class="a" style="left:22px;top:720px;width:1548px;height:1px;background:#2B2D2E;"></div>
<div class="t " style="left:28px;top:700px;font-size:13px">Git:</div>
<div class="t " style="left:66px;top:700px;font-size:13px">Local Changes</div>
<div class="t " style="left:174px;top:700px;font-size:13px">Console</div>
<svg class="a" style="left:228px;top:704px" width="7" height="7" viewBox="0 0 7 7"><path d="M0 0L7 7M7 0L0 7" stroke="#6E7173" stroke-width="1.1"/></svg>
<div class="t " style="left:259px;top:700px;font-size:13px">Log</div>
<div class="t " style="left:305px;top:700px;font-size:13px">Log: on HEAD in git_workspace</div>
<svg class="a" style="left:494px;top:704px" width="7" height="7" viewBox="0 0 7 7"><path d="M0 0L7 7M7 0L0 7" stroke="#6E7173" stroke-width="1.1"/></svg>
<div class="t " style="left:525px;top:700px;font-size:13.2px">Update Info: 2021/1/19 19:39</div>
<svg class="a" style="left:722px;top:704px" width="7" height="7" viewBox="0 0 7 7"><path d="M0 0L7 7M7 0L0 7" stroke="#6E7173" stroke-width="1.1"/></svg>
<div class="t " style="left:753px;top:700px;font-size:12.5px">Pull Requests</div>
<svg class="a" style="left:837px;top:704px" width="7" height="7" viewBox="0 0 7 7"><path d="M0 0L7 7M7 0L0 7" stroke="#6E7173" stroke-width="1.1"/></svg>
<svg class="a" style="left:702px;top:705px" width="9" height="5" viewBox="0 0 9 5"><path d="M0 0H9L4.5 5Z" fill="#BBBBBB"/></svg>
<div class="a" style="left:293px;top:718px;width:220px;height:3px;background:#747A80;"></div>
<svg class="a" style="left:1525px;top:701px" width="14" height="14" viewBox="0 0 14 14"><path d="M4.85 2.60L5.47 0.37L8.53 0.37L9.15 2.60L9.74 2.94L11.97 2.36L13.50 5.01L11.89 6.66L11.89 7.34L13.50 8.99L11.97 11.64L9.74 11.06L9.15 11.40L8.53 13.63L5.47 13.63L4.85 11.40L4.26 11.06L2.03 11.64L0.50 8.99L2.11 7.34L2.11 6.66L0.50 5.01L2.03 2.36L4.26 2.94Z" fill="#AFB1B3" stroke="#AFB1B3" stroke-width="0.8" stroke-linejoin="round"/><circle cx="7" cy="7" r="2.1" fill="#3C3F41"/></svg>
<div class="a" style="left:1551px;top:706px;width:12px;height:2px;background:#AFB1B3;"></div>
<div class="a" style="left:49px;top:721px;width:1px;height:218px;background:#2B2D2E;"></div>
<svg class="a" style="left:32px;top:732px" width="8" height="11" viewBox="0 0 8 11"><path d="M1 1L6 5.5L1 10" stroke="#AFB1B3" stroke-width="1.6" fill="none"/></svg>
<div class="a" style="left:29px;top:803px;width:60px;height:14px;transform-origin:0 0;transform:rotate(-90deg);font-size:11.8px;line-height:14px;color:#BBBBBB;white-space:pre">Branches</div>
<div class="a" style="left:50px;top:751px;width:936px;height:1px;background:#2B2D2E;"></div>
<div class="a" style="left:57px;top:724px;width:165px;height:24px;background:#45494A;border:1px solid #646464;border-radius:3px"></div>
<svg class="a" style="left:63px;top:729px" width="16" height="14" viewBox="0 0 16 14"><circle cx="5.5" cy="5.5" r="4.3" fill="none" stroke="#8E9193" stroke-width="1.1"/><path d="M8.5 8.5L11.5 11.5" stroke="#8E9193" stroke-width="1.3"/><path d="M10 4H15L12.5 6.5Z" fill="#8E9193"/></svg>
<svg class="a" style="left:233px;top:729px" width="14" height="14" viewBox="0 0 14 14"><path d="M4.85 2.60L5.47 0.37L8.53 0.37L9.15 2.60L9.74 2.94L11.97 2.36L13.50 5.01L11.89 6.66L11.89 7.34L13.50 8.99L11.97 11.64L9.74 11.06L9.15 11.40L8.53 13.63L5.47 13.63L4.85 11.40L4.26 11.06L2.03 11.64L0.50 8.99L2.11 7.34L2.11 6.66L0.50 5.01L2.03 2.36L4.26 2.94Z" fill="#AFB1B3" stroke="#AFB1B3" stroke-width="0.8" stroke-linejoin="round"/><circle cx="7" cy="7" r="2.1" fill="#3C3F41"/></svg>
<svg class="a" style="left:243px;top:741px" width="7" height="4" viewBox="0 0 7 4"><path d="M0 0H7L3.5 4Z" fill="#AFB1B3"/></svg>
<div class="a" style="left:256px;top:726px;width:1px;height:20px;background:#515456;"></div>
<div class="t " style="left:264px;top:729px;font-size:12.3px">Branch: HEAD</div>
<svg class="a" style="left:347px;top:731px" width="7" height="11" viewBox="0 0 7 11"><path d="M0.5 4.5L3.5 1L6.5 4.5Z" fill="#AFB1B3"/><path d="M0.5 6.5L3.5 10L6.5 6.5Z" fill="#AFB1B3"/></svg>
<div class="t " style="left:362px;top:729px;font-size:12.3px">User: All</div>
<svg class="a" style="left:413px;top:731px" width="7" height="11" viewBox="0 0 7 11"><path d="M0.5 4.5L3.5 1L6.5 4.5Z" fill="#AFB1B3"/><path d="M0.5 6.5L3.5 10L6.5 6.5Z" fill="#AFB1B3"/></svg>
<div class="t " style="left:428px;top:729px;font-size:12.3px">Date: All</div>
<svg class="a" style="left:480px;top:731px" width="7" height="11" viewBox="0 0 7 11"><path d="M0.5 4.5L3.5 1L6.5 4.5Z" fill="#AFB1B3"/><path d="M0.5 6.5L3.5 10L6.5 6.5Z" fill="#AFB1B3"/></svg>
<div class="t " style="left:494px;top:729px;font-size:12.3px">Paths: All</div>
<svg class="a" style="left:550px;top:731px" width="7" height="11" viewBox="0 0 7 11"><path d="M0.5 4.5L3.5 1L6.5 4.5Z" fill="#AFB1B3"/><path d="M0.5 6.5L3.5 10L6.5 6.5Z" fill="#AFB1B3"/></svg>
<div class="a" style="left:563px;top:726px;width:1px;height:20px;background:#515456;"></div>
<svg class="a" style="left:572px;top:729px" width="14" height="14" viewBox="0 0 14 14"><path d="M12 5A5.5 5.5 0 0 0 2 4.5" stroke="#AFB1B3" stroke-width="1.8" fill="none"/><path d="M2 9A5.5 5.5 0 0 0 12 9.5" stroke="#AFB1B3" stroke-width="1.8" fill="none"/><path d="M9.5 5.5H13.5V1.5Z" fill="#AFB1B3"/><path d="M4.5 8.5H0.5V12.5Z" fill="#AFB1B3"/></svg>
<svg class="a" style="left:599px;top:729px" width="15" height="14" viewBox="0 0 15 14"><circle cx="4" cy="9" r="3.8" fill="#AFB1B3"/><circle cx="9" cy="10" r="3.8" fill="#AFB1B3"/><path d="M4 6Q7 1 13 0.5M9 7Q9 3 13 0.5" stroke="#AFB1B3" stroke-width="1.2" fill="none"/></svg>
<svg class="a" style="left:625px;top:729px" width="15" height="14" viewBox="0 0 15 14"><path d="M4 0V10" stroke="#AFB1B3" stroke-width="1.8"/><path d="M0.5 9H7.5L4 13.5Z" fill="#AFB1B3"/><path d="M11 0.5V13.5" stroke="#AFB1B3" stroke-width="1.2"/><circle cx="11" cy="4" r="2.2" fill="#AFB1B3"/><circle cx="11" cy="10" r="2.2" fill="#AFB1B3"/></svg>
<svg class="a" style="left:650px;top:730px" width="17" height="14" viewBox="0 0 17 14"><path d="M0.5 6Q8 -2 15.5 6Q8 14 0.5 6Z" fill="#AFB1B3"/><circle cx="8" cy="6" r="2.6" fill="#3C3F41"/><circle cx="8" cy="6" r="1.3" fill="#AFB1B3"/><path d="M12 10H17L14.5 13Z" fill="#AFB1B3"/></svg>
<div class="a" style="left:674px;top:726px;width:1px;height:20px;background:#515456;"></div>
<svg class="a" style="left:682px;top:728px" width="17" height="15" viewBox="0 0 17 15"><path d="M1 15V1H15V6" stroke="#AFB1B3" stroke-width="1.4" fill="none"/><path d="M8.5 4V12M4.5 8H12.5" stroke="#AFB1B3" stroke-width="1.8"/><path d="M15 11V15" stroke="#AFB1B3" stroke-width="1.4"/></svg>
<svg class="a" style="left:963px;top:729px" width="15" height="15" viewBox="0 0 15 15"><circle cx="6" cy="6" r="4.8" fill="none" stroke="#AFB1B3" stroke-width="1.8"/><path d="M9.5 9.5L14 14" stroke="#AFB1B3" stroke-width="2.2"/></svg>
<div class="a" style="left:50px;top:848px;width:936px;height:24px;background:#0D293E;"></div>
<div class="t " style="left:82px;top:756px;color:#BBBBBB;font-weight:normal;font-size:13px"><span class="c12">来自欢姐的喜爱</span></div>
<div class="t " style="left:806px;top:756px;color:#BBBBBB;font-weight:normal;font-size:13px">1127914080*</div>
<div class="t " style="left:895px;top:756px;color:#BBBBBB;font-weight:normal;font-size:13px">Today 19:36</div>
<div class="t " style="left:82px;top:780px;color:#656565;font-weight:bold;font-size:13px">Merge branch 'dev'</div>
<div class="t " style="left:806px;top:780px;color:#656565;font-weight:bold;font-size:13px">dahuanhuan</div>
<div class="t " style="left:895px;top:780px;color:#656565;font-weight:bold;font-size:13px">Today 15:53</div>
<div class="t " style="left:82px;top:804px;color:#BBBBBB;font-weight:bold;font-size:13px"><span class="c12">分支添加</span></div>
<div class="t " style="left:806px;top:804px;color:#BBBBBB;font-weight:bold;font-size:13px">dahuanhuan</div>
<div class="t " style="left:895px;top:804px;color:#BBBBBB;font-weight:bold;font-size:13px">Today 15:28</div>
<div class="t " style="left:82px;top:828px;color:#BBBBBB;font-weight:bold;font-size:13px"><span class="c12">主干添加</span></div>
<div class="t " style="left:806px;top:828px;color:#BBBBBB;font-weight:bold;font-size:13px">dahuanhuan</div>
<div class="t " style="left:895px;top:828px;color:#BBBBBB;font-weight:bold;font-size:13px">Today 15:17</div>
<div class="t " style="left:82px;top:852px;color:#BBBBBB;font-weight:bold;font-size:13px"><span class="c12">创建分支</span></div>
<div class="t " style="left:806px;top:852px;color:#BBBBBB;font-weight:bold;font-size:13px">dahuanhuan</div>
<div class="t " style="left:895px;top:852px;color:#BBBBBB;font-weight:bold;font-size:13px">Today 12:19</div>
<div class="t " style="left:82px;top:876px;color:#BBBBBB;font-weight:bold;font-size:13px"><span class="c12">更新1</span></div>
<div class="t " style="left:806px;top:876px;color:#BBBBBB;font-weight:bold;font-size:13px">dahuanhuan</div>
<div class="t " style="left:895px;top:876px;color:#BBBBBB;font-weight:bold;font-size:13px">Today 11:32</div>
<div class="t " style="left:82px;top:900px;color:#BBBBBB;font-weight:bold;font-size:13px"><span class="c12">欢姐不是好东西</span></div>
<div class="t " style="left:806px;top:900px;color:#BBBBBB;font-weight:bold;font-size:13px">dahuanhuan</div>
<div class="t " style="left:895px;top:900px;color:#BBBBBB;font-weight:bold;font-size:13px">Today 11:21</div>
<div class="a" style="left:688px;top:755px;width:115px;height:18px;background:#4A4D4F;"></div>
<svg class="a" style="left:692px;top:758px" width="26" height="14" viewBox="0 0 26 14"><path transform="translate(10.5 0)" d="M0 0H4.5L13 7.2L7.5 12.5L0 5.5Z" fill="#A87BC8"/><path transform="translate(5.5 0)" d="M0 0H4.5L13 7.2L7.5 12.5L0 5.5Z" fill="#3FAF4F"/><path d="M0 0H4.5L13 7.2L7.5 12.5L0 5.5Z" fill="#E5C83A"/><circle cx="3.3" cy="3.4" r="1.1" fill="#3C3F41"/></svg>
<div class="t " style="left:717px;top:756px;color:#8C8C8C;font-size:12px">origin &amp; master</div>
<div class="a" style="left:761px;top:803px;width:42px;height:18px;background:#4A4D4F;"></div>
<svg class="a" style="left:765px;top:806px" width="14" height="14" viewBox="0 0 14 14"><path d="M0 0H4.5L13 7.2L7.5 12.5L0 5.5Z" fill="#3FAF4F"/><circle cx="3.3" cy="3.4" r="1.1" fill="#3C3F41"/></svg>
<div class="t " style="left:780px;top:804px;color:#8C8C8C;font-size:12px">dev</div>
<svg class="a" style="left:50px;top:752px" width="40" height="170" viewBox="0 0 40 170"><path d="M8.5 12V156" stroke="#A68C5C" stroke-width="1.6"/><path d="M8.5 36L24.5 60V84L8.5 108" stroke="#7E62B0" stroke-width="1.6" fill="none"/><circle cx="8.5" cy="12" r="4" fill="#A68C5C"/><circle cx="8.5" cy="36" r="4" fill="#A68C5C"/><circle cx="24.5" cy="60" r="4" fill="#7E62B0"/><circle cx="8.5" cy="84" r="4" fill="#A68C5C"/><circle cx="8.5" cy="108" r="4" fill="#A68C5C"/><circle cx="8.5" cy="132" r="4" fill="#A68C5C"/><circle cx="8.5" cy="156" r="4" fill="#A68C5C"/></svg>
<div class="a" style="left:986px;top:721px;width:1px;height:218px;background:#2B2D2E;"></div>
<svg class="a" style="left:994px;top:728px" width="16" height="16" viewBox="0 0 16 16"><path d="M15 5H10M10 5L7 9M1 10H6M6 10L3 14" stroke="#3A97D4" stroke-width="1.8" fill="none"/><path d="M6.5 5L11 1.5V8.5Z" fill="#3A97D4"/><path d="M9.5 10L5 6.5V13.5Z" fill="#3A97D4"/></svg>
<svg class="a" style="left:1021px;top:729px" width="14" height="13" viewBox="0 0 14 13"><path d="M2 5H8A4 4 0 0 1 8 13" stroke="#5A5D5F" stroke-width="1.5" fill="none"/><path d="M0 5L4.5 1V9Z" fill="#5A5D5F"/></svg>
<svg class="a" style="left:1047px;top:728px" width="15" height="15" viewBox="0 0 15 15"><circle cx="7.5" cy="7.5" r="6.3" fill="none" stroke="#5A5D5F" stroke-width="1.5"/><path d="M7.5 3.5V8L10 9.5" stroke="#5A5D5F" stroke-width="1.4" fill="none"/></svg>
<div class="a" style="left:1071px;top:726px;width:1px;height:20px;background:#515456;"></div>
<svg class="a" style="left:1081px;top:731px" width="16" height="15" viewBox="0 0 16 15"><rect x="0" y="0" width="4.5" height="4.5" fill="#AFB1B3"/><rect x="6" y="0" width="4.5" height="4.5" fill="#AFB1B3"/><rect x="0" y="6" width="4.5" height="4.5" fill="#AFB1B3"/><rect x="6" y="6" width="4.5" height="4.5" fill="#AFB1B3"/><path d="M9 11H15L12 14Z" fill="#AFB1B3"/></svg>
<div class="a" style="left:1104px;top:726px;width:1px;height:20px;background:#515456;"></div>
<svg class="a" style="left:1113px;top:731px" width="16" height="15" viewBox="0 0 16 15"><rect x="0" y="0" width="13" height="5" fill="#AFB1B3"/><rect x="0" y="6" width="7" height="4.5" fill="#AFB1B3"/><rect x="8" y="6" width="5" height="4.5" fill="#AFB1B3"/><path d="M9 11H15L12 14Z" fill="#AFB1B3"/></svg>
<svg class="a" style="left:1523px;top:729px" width="13" height="14" viewBox="0 0 13 14"><rect x="0" y="0" width="12" height="2" fill="#AFB1B3"/><path d="M3 6H9L6 3Z" fill="#AFB1B3"/><path d="M3 8H9L6 11Z" fill="#AFB1B3"/><rect x="0" y="12" width="12" height="2" fill="#AFB1B3"/></svg>
<svg class="a" style="left:1549px;top:729px" width="13" height="13" viewBox="0 0 13 13"><path d="M3 0H10L6.5 3Z" fill="#AFB1B3"/><rect x="0" y="5.5" width="13" height="2" fill="#AFB1B3"/><path d="M3 13H10L6.5 10Z" fill="#AFB1B3"/></svg>
<div class="a" style="left:987px;top:751px;width:583px;height:1px;background:#2B2D2E;"></div>
<svg class="a" style="left:990px;top:758px" width="9" height="8" viewBox="0 0 9 8"><path d="M0 0H9L4.5 8Z" fill="#9A9DA1"/></svg>
<svg class="a" style="left:1008px;top:756px" width="16" height="15" viewBox="0 0 16 15"><path d="M0 0H6L7.5 2H14V10H8.5V14H0Z" fill="#9AA7B0"/><rect x="9" y="9" width="6" height="6" fill="#3BA8E0"/></svg>
<div class="t " style="left:1026px;top:755px;">HelloGit</div>
<div class="t " style="left:1079px;top:755px;color:#8C8C8C">1 file</div>
<div class="t " style="left:1112px;top:755px;color:#8C8C8C">E:\Project\git_workspace\HelloGit</div>
<svg class="a" style="left:1008px;top:778px" width="9" height="8" viewBox="0 0 9 8"><path d="M0 0H9L4.5 8Z" fill="#9A9DA1"/></svg>
<svg class="a" style="left:1026px;top:777px" width="15" height="12" viewBox="0 0 15 12"><path d="M0 0H6L7.5 2H15V12H0Z" fill="#9AA7B0"/></svg>
<div class="t " style="left:1044px;top:775px;">src\main\java\com\huan</div>
<div class="t " style="left:1191px;top:775px;color:#8C8C8C">1 file</div>
<svg class="a" style="left:1044px;top:796px" width="15" height="15" viewBox="0 0 15 15"><path d="M4.5 0H12V7H2V2.5Z" fill="#9AA7B0"/><path d="M2 0H4L2 2Z" fill="#3C3F41"/><rect x="0" y="7.5" width="15" height="7.5" fill="#3D89B5"/><text x="3" y="14" font-size="7" fill="#1E3040" font-family="Liberation Sans">J</text></svg>
<div class="t " style="left:1062px;top:795px;color:#6897BB">HelloGit.java</div>
<div class="a" style="left:987px;top:913px;width:584px;height:1px;background:#2F3133;"></div>
<div class="a" style="left:1562px;top:915px;width:8px;height:24px;background:#4E5254;"></div>
<div class="a" style="left:987px;top:913px;width:574px;height:26px;overflow:hidden"><div class="t b" style="left:18px;top:20px;color:#BBBBBB;font-size:19px;letter-spacing:2px;line-height:24px">创建分支</div></div>
<div class="a" style="left:1571px;top:694px;width:1px;height:245px;background:#2B2D2E;"></div>
<div class="a" style="left:1572px;top:694px;width:327px;height:26px;background:#3C3F41;"></div>
<div class="a" style="left:1572px;top:720px;width:327px;height:1px;background:#2B2D2E;"></div>
<div class="t " style="left:1578px;top:700px;font-size:13px">Event Log</div>
<svg class="a" style="left:1853px;top:700px" width="14" height="14" viewBox="0 0 14 14"><path d="M4.85 2.60L5.47 0.37L8.53 0.37L9.15 2.60L9.74 2.94L11.97 2.36L13.50 5.01L11.89 6.66L11.89 7.34L13.50 8.99L11.97 11.64L9.74 11.06L9.15 11.40L8.53 13.63L5.47 13.63L4.85 11.40L4.26 11.06L2.03 11.64L0.50 8.99L2.11 7.34L2.11 6.66L0.50 5.01L2.03 2.36L4.26 2.94Z" fill="#AFB1B3" stroke="#AFB1B3" stroke-width="0.8" stroke-linejoin="round"/><circle cx="7" cy="7" r="2.1" fill="#3C3F41"/></svg>
<div class="a" style="left:1880px;top:706px;width:12px;height:2px;background:#AFB1B3;"></div>
<div class="a" style="left:1572px;top:721px;width:28px;height:218px;background:#3C3F41;"></div>
<div class="a" style="left:1600px;top:721px;width:298px;height:218px;background:#2B2B2B;"></div>
<svg class="a" style="left:1580px;top:729px" width="14" height="14" viewBox="0 0 14 14"><rect x="0.7" y="2.7" width="10.6" height="10.6" fill="none" stroke="#AFB1B3" stroke-width="1.4"/><path d="M3 7L6 10L13 2" stroke="#AFB1B3" stroke-width="1.8" fill="none"/></svg>
<svg class="a" style="left:1581px;top:755px" width="11" height="13" viewBox="0 0 11 13"><rect x="0" y="1" width="11" height="2" fill="#AFB1B3"/><rect x="3.5" y="0" width="4" height="1.5" fill="#AFB1B3"/><path d="M1 4H10L9.3 13H1.7Z" fill="#AFB1B3"/></svg>
<div class="a" style="left:1576px;top:778px;width:20px;height:1px;background:#515456;"></div>
<svg class="a" style="left:1579px;top:788px" width="14" height="14" viewBox="0 0 14 14"><path d="M1 13L7 7" stroke="#AFB1B3" stroke-width="2.6"/><path d="M6 6A3.8 3.8 0 0 1 11 1.2L9 3.5L10.5 5L12.8 3A3.8 3.8 0 0 1 8 8Z" fill="#AFB1B3"/></svg>
<div class="t " style="left:1605px;top:733px;font-size:13px">15:30</div>
<div class="t " style="left:1653px;top:733px;font-size:13.2px">Checked out master (<span style="color:#589DF6;text-decoration:underline">show balloon</span>)</div>
<div class="t " style="left:1605px;top:775px;font-size:13px">15:53</div>
<div class="t b" style="left:1653px;top:775px;font-size:13.2px">1 file updated in 1 commit</div>
<div class="t " style="left:1605px;top:838px;font-size:13px">16:12</div>
<div class="t " style="left:1653px;top:838px;font-size:13.2px">Pushed master to new branch origin/master</div>
<div class="t " style="left:1605px;top:880px;font-size:13px">19:35</div>
<div class="t " style="left:1653px;top:880px;font-size:13.2px">All files are up-to-date</div>
<div class="t " style="left:1605px;top:922px;font-size:13px">19:39</div>
<div class="t b" style="left:1653px;top:922px;font-size:13.2px">1 file updated in 1 commit</div>
<div class="t " style="left:1653px;top:796px;font-size:13px"><span style="color:#589DF6;text-decoration:underline">View Commits</span></div>
<div class="a" style="left:1890px;top:919px;width:8px;height:20px;background:#4E5254;"></div>
<div class="a" style="left:1885px;top:799px;width:14px;height:2px;background:#5C9B4A;"></div>
<div class="a" style="left:1885px;top:829px;width:14px;height:2px;background:#5C9B4A;"></div>
<div class="a" style="left:1885px;top:859px;width:14px;height:2px;background:#5C9B4A;"></div>
<div class="a" style="left:1885px;top:901px;width:14px;height:2px;background:#5C9B4A;"></div>
<div class="a" style="left:1885px;top:931px;width:14px;height:2px;background:#5C9B4A;"></div>
<div class="a" style="left:1900px;top:694px;width:19px;height:245px;background:#3C3F41;"></div>
<div class="a" style="left:1899px;top:694px;width:1px;height:245px;background:#2B2D2E;"></div>
<div class="a" style="left:1915px;top:925px;width:60px;height:14px;transform-origin:0 0;transform:rotate(90deg);font-size:12.5px;line-height:14px;color:#BBBBBB;white-space:pre">Word</div>
<svg class="a" style="left:1904px;top:909px" width="12" height="12" viewBox="0 0 12 12"><rect x="0" y="0" width="1.5" height="13" fill="#AFB1B3"/><rect x="3" y="0" width="10" height="13" fill="#AFB1B3"/><rect x="5" y="3" width="6" height="1.5" fill="#3C3F41"/><rect x="5" y="6" width="6" height="1.5" fill="#3C3F41"/><rect x="5" y="9" width="6" height="1.5" fill="#3C3F41"/></svg>
<div class="a" style="left:1716px;top:25px;width:28px;height:35px;background:transparent;border:3px solid #F23C3C"></div>
<svg class="a" style="left:0;top:0" width="1919" height="939"><polygon points="1479.5,313.0 1709.0,68.5 1702.5,67.8 1720.0,61.0 1714.1,78.8 1713.1,72.4 1480.5,314.0" fill="#F23C3C"/></svg>
<div class="t " style="left:1387px;top:327px;color:#EE3B3B;font-size:16px;line-height:18px">点击绿色箭头提交到本地库</div>
</body></html>
